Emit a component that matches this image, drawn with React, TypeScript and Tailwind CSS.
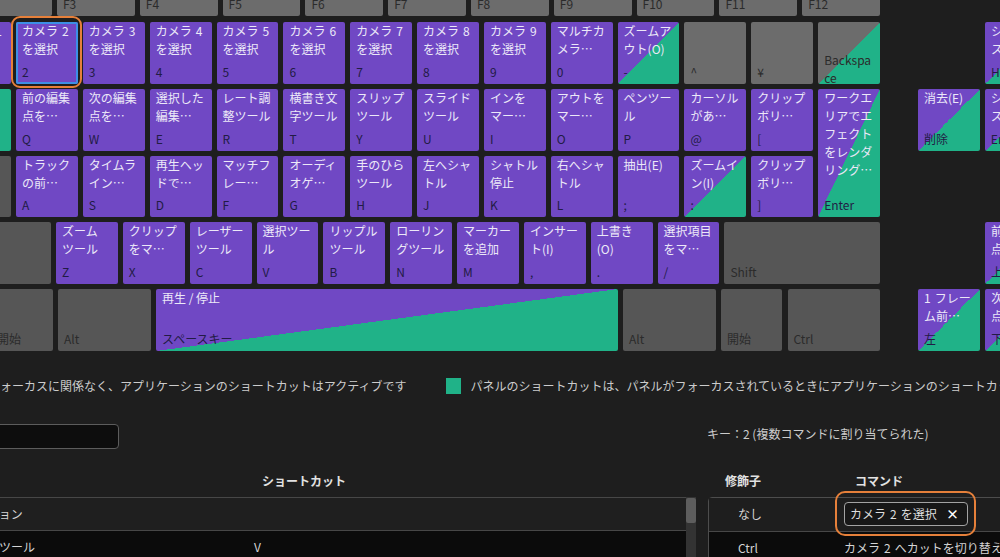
import React from "react";

type Kind = "p" | "s" | "gs" | "gl" | "gd" | "green";

interface KeyDef {
  w: string;
  h?: string;
  kind: Kind;
  lines?: string[];
  label?: string[];
  ml?: string;
  sel?: boolean;
  labelClass?: string;
}

const BG: Record<Kind, string> = {
  p: "bg-[#7048c4]",
  s: "bg-[linear-gradient(to_bottom_right,#7048c4_50%,#20b288_50%)]",
  gs: "bg-[linear-gradient(to_bottom_right,#6c6c6c_50%,#20b288_50%)]",
  gl: "bg-[#6c6c6c]",
  gd: "bg-[#565656]",
  green: "bg-[#20b288]",
};

const W = "w-[61.85px]";
const FW = "w-[77.8px]";
const SP = "\u2004";

function Key({ k }: { k: KeyDef }) {
  const gray = k.kind === "gl" || k.kind === "gd" || k.kind === "gs";
  return (
    <div
      className={`relative shrink-0 rounded-[2px] flex flex-col justify-between px-[6px] pb-[3px] ${k.w} ${
        k.h ?? "h-[61.8px]"
      } ${BG[k.kind]} ${k.ml ?? ""} ${k.sel ? "shadow-[inset_0_0_0_2px_#3d8fe6]" : ""}`}
    >
      <div className="text-[12px] leading-[18px] text-[#ece8f8] whitespace-nowrap">
        {(k.lines ?? []).map((l, i) => (
          <div key={i}>{l}</div>
        ))}
      </div>
      <div
        className={`text-[12px] leading-[18px] whitespace-nowrap ${
          gray ? "text-[#2b2b2b]" : "text-[#221b45]"
        } ${k.labelClass ?? ""}`}
      >
        {(k.label ?? []).map((l, i) => (
          <div key={i}>{l}</div>
        ))}
      </div>
      {k.sel && (
        <div className="absolute -left-[5px] -right-[4px] -top-[6px] -bottom-[4px] rounded-[9px] border-2 border-[#e6803a] pointer-events-none" />
      )}
    </div>
  );
}

const fRow: KeyDef[] = ["F2", "F3", "F4", "F5", "F6", "F7", "F8", "F9", "F10", "F11", "F12"].map(
  (f) => ({ w: FW, kind: "gl" as Kind, label: [f] })
);

const cam = (n: number, sel = false): KeyDef => ({
  w: W,
  kind: "p",
  lines: [`カメラ${SP}${n}`, "を選択"],
  label: [String(n)],
  sel,
});

const row1: KeyDef[] = [
  cam(1),
  cam(2, true),
  cam(3),
  cam(4),
  cam(5),
  cam(6),
  cam(7),
  cam(8),
  cam(9),
  { w: W, kind: "p", lines: ["マルチカ", "メラ…"], label: ["0"] },
  { w: W, kind: "s", lines: ["ズームア", "ウト(O)"], label: ["-"] },
  { w: W, kind: "gl", label: ["^"] },
  { w: W, kind: "gl", label: ["¥"] },
  { w: W, kind: "gs", label: ["Backspa", "ce"], labelClass: "mb-[-6.5px]" },
  { w: W, kind: "s", lines: ["シーケン", "スの先…"], label: ["Home"], ml: "ml-[100px]" },
];

const row2: KeyDef[] = [
  { w: W, kind: "green" },
  { w: W, kind: "p", lines: ["前の編集", "点を…"], label: ["Q"] },
  { w: W, kind: "p", lines: ["次の編集", "点を…"], label: ["W"] },
  { w: W, kind: "p", lines: ["選択した", "編集…"], label: ["E"] },
  { w: W, kind: "p", lines: ["レート調", "整ツール"], label: ["R"] },
  { w: W, kind: "p", lines: ["横書き文", "字ツール"], label: ["T"] },
  { w: W, kind: "p", lines: ["スリップ", "ツール"], label: ["Y"] },
  { w: W, kind: "p", lines: ["スライド", "ツール"], label: ["U"] },
  { w: W, kind: "p", lines: ["インを", "マー…"], label: ["I"] },
  { w: W, kind: "p", lines: ["アウトを", "マー…"], label: ["O"] },
  { w: W, kind: "p", lines: ["ペンツー", "ル"], label: ["P"] },
  { w: W, kind: "p", lines: ["カーソル", "があ…"], label: ["@"] },
  { w: W, kind: "p", lines: ["クリップ", "ボリ…"], label: ["["] },
];

const row3: KeyDef[] = [
  { w: W, kind: "gd" },
  { w: W, kind: "p", lines: ["トラック", "の前…"], label: ["A"] },
  { w: W, kind: "p", lines: ["タイムラ", "イン…"], label: ["S"] },
  { w: W, kind: "p", lines: ["再生ヘッ", "ドで…"], label: ["D"] },
  { w: W, kind: "p", lines: ["マッチフ", "レー…"], label: ["F"] },
  { w: W, kind: "p", lines: ["オーディ", "オゲ…"], label: ["G"] },
  { w: W, kind: "p", lines: ["手のひら", "ツール"], label: ["H"] },
  { w: W, kind: "p", lines: ["左へシャ", "トル"], label: ["J"] },
  { w: W, kind: "p", lines: ["シャトル", "停止"], label: ["K"] },
  { w: W, kind: "p", lines: ["右へシャ", "トル"], label: ["L"] },
  { w: W, kind: "p", lines: ["抽出(E)"], label: [";"] },
  { w: W, kind: "s", lines: ["ズームイ", "ン(I)"], label: [":"] },
  { w: W, kind: "p", lines: ["クリップ", "ボリ…"], label: ["]"] },
];

const enterKey: KeyDef = {
  w: W,
  h: "h-[128.6px]",
  kind: "s",
  lines: ["ワークエ", "リアでエ", "フェクト", "をレンダ", "リング…"],
  label: ["Enter"],
};

const delKey: KeyDef = { w: W, kind: "s", lines: ["消去(E)"], label: ["削除"], ml: "ml-[33px]" };
const endKey: KeyDef = { w: W, kind: "s", lines: ["シーケン", "スの最…"], label: ["End"] };

const row4: KeyDef[] = [
  { w: "w-[101.85px]", kind: "gd", label: ["Shift"] },
  { w: W, kind: "p", lines: ["ズーム", "ツール"], label: ["Z"] },
  { w: W, kind: "p", lines: ["クリップ", "をマ…"], label: ["X"] },
  { w: W, kind: "p", lines: ["レーザー", "ツール"], label: ["C"] },
  { w: W, kind: "p", lines: ["選択ツー", "ル"], label: ["V"] },
  { w: W, kind: "p", lines: ["リップル", "ツール"], label: ["B"] },
  { w: W, kind: "p", lines: ["ローリン", "グツール"], label: ["N"] },
  { w: W, kind: "p", lines: ["マーカー", "を追加"], label: ["M"] },
  { w: W, kind: "p", lines: ["インサー", "ト(I)"], label: [","] },
  { w: W, kind: "p", lines: ["上書き", "(O)"], label: ["."] },
  { w: W, kind: "p", lines: ["選択項目", "をマ…"], label: ["/"] },
  { w: "w-[155.5px]", kind: "gd", label: ["Shift"] },
  { w: W, kind: "s", lines: ["前の編集", "点を…"], label: ["上"], ml: "ml-[100px]" },
];

const row5: KeyDef[] = [
  { w: "w-[61.5px]", kind: "gd", label: ["開始"] },
  { w: "w-[92.5px]", kind: "gd", label: ["Alt"] },
  { w: "w-[461.5px]", kind: "s", lines: ["再生 / 停止"], label: ["スペースキー"] },
  { w: "w-[92.5px]", kind: "gd", label: ["Alt"] },
  { w: "w-[61px]", kind: "gd", label: ["開始"] },
  { w: "w-[92px]", kind: "gd", label: ["Ctrl"] },
  { w: W, kind: "s", lines: [`1${SP}フレー`, "ム前…"], label: ["左"], ml: "ml-[33px]" },
  { w: W, kind: "s", lines: ["次の編集", "点を…"], label: ["下"] },
];

export default function App() {
  return (
    <div className="w-[1000px] h-[557px] overflow-hidden bg-[#1e1e1e] flex flex-col font-['Noto_Sans_CJK_JP','Noto_Sans',sans-serif]">
      {/* Function row */}
      <div className="flex gap-[5px] mt-[-45.8px] ml-[-25.8px] shrink-0">
        {fRow.map((k, i) => (
          <Key key={i} k={k} />
        ))}
      </div>
      {/* Number row */}
      <div className="flex gap-[5px] mt-[6px] ml-[-50.85px] shrink-0">
        {row1.map((k, i) => (
          <Key key={i} k={k} />
        ))}
      </div>
      {/* QWERTY + ASDF rows with tall Enter */}
      <div className="flex items-start gap-[5px] mt-[5px] ml-[-50.85px] shrink-0">
        <div className="flex flex-col gap-[5px] shrink-0">
          <div className="flex gap-[5px]">
            {row2.map((k, i) => (
              <Key key={i} k={k} />
            ))}
          </div>
          <div className="flex gap-[5px]">
            {row3.map((k, i) => (
              <Key key={i} k={k} />
            ))}
          </div>
        </div>
        <Key k={enterKey} />
        <Key k={delKey} />
        <Key k={endKey} />
      </div>
      {/* ZXCV row */}
      <div className="flex gap-[5px] mt-[5px] ml-[-50.85px] shrink-0">
        {row4.map((k, i) => (
          <Key key={i} k={k} />
        ))}
      </div>
      {/* Bottom row */}
      <div className="flex gap-[5.5px] mt-[5px] ml-[-9px] shrink-0">
        {row5.map((k, i) => (
          <Key key={i} k={k} />
        ))}
      </div>

      {/* Legend */}
      <div className="mt-[26px] flex items-center h-[18px] text-[12px] leading-[18px] text-[#cccccc] whitespace-nowrap shrink-0">
        <span className="ml-[-12px] shrink-0">フォーカスに関係なく、アプリケーションのショートカットはアクティブです</span>
        <span className="ml-[40px] w-[15px] h-[16px] bg-[#20b288] shrink-0" />
        <span className="ml-[9px] shrink-0">
          パネルのショートカットは、パネルがフォーカスされているときにアプリケーションのショートカットより優先されます
        </span>
      </div>

      {/* Search + key info */}
      <div className="mt-[29px] flex h-[25px] shrink-0">
        <div className="ml-[-20px] w-[139px] h-[25px] shrink-0 bg-[#0d0d0d] border border-[#5c5c5c] rounded-[4px]" />
        <div className="ml-[588px] mt-[1px] text-[12px] leading-[18px] text-[#cccccc] whitespace-nowrap">
          キー：2 (複数コマンドに割り当てられた)
        </div>
      </div>

      {/* Tables */}
      <div className="mt-[23px] flex shrink-0">
        <div className="w-[696px] shrink-0">
          <div className="h-[18px] pl-[262px] text-[12px] leading-[18px] font-bold text-[#e2e2e2]">ショートカット</div>
          <div className="mt-[7px] flex">
            <div className="flex-1 border-t border-[#474747] text-[12px] leading-[18px] text-[#d4d4d4]">
              <div className="h-[33px] border-b border-[#474747] bg-[#1f1f1f] flex items-center whitespace-nowrap overflow-hidden">
                <span className="ml-[-73px]">アプリケーション</span>
              </div>
              <div className="h-[40px] bg-[#0b0b0b] flex items-start pt-[7px] whitespace-nowrap overflow-hidden">
                <span className="ml-[-25px] w-[279px] shrink-0">選択ツール</span>
                <span>V</span>
              </div>
            </div>
            <div className="w-[10px] bg-[#333333] flex flex-col">
              <div className="mt-[1px] h-[25px] bg-[#5d5d5d] rounded-[2px]" />
            </div>
          </div>
        </div>
        <div className="ml-[12px] w-[400px] shrink-0">
          <div className="h-[18px] flex text-[12px] leading-[18px] font-bold text-[#e2e2e2]">
            <span className="w-[147px] pl-[17px] shrink-0">修飾子</span>
            <span>コマンド</span>
          </div>
          <div className="mt-[7px] border border-[#4d4d4d] rounded-tl-[4px] text-[12px] leading-[18px] text-[#d4d4d4]">
            <div className="h-[33px] flex items-center bg-[#1e1e1e]">
              <span className="w-[135px] pl-[29px] shrink-0">なし</span>
              <div className="relative w-[124px] h-[24px] flex items-center pl-[5px] pr-[8px] border border-[#a3a3a3] rounded-[4px] bg-[#171717] text-[#dedede] whitespace-nowrap">
                <span>{`カメラ${SP}2${SP}を選択`}</span>
                <span className="ml-auto font-bold text-white text-[13px]">×</span>
                <div className="absolute -left-[10px] -right-[9px] -top-[12px] -bottom-[11px] rounded-[10px] border-2 border-[#e6803a] pointer-events-none" />
              </div>
            </div>
            <div className="h-[40px] border-t border-[#474747] bg-[#0b0b0b] flex items-start pt-[7px] whitespace-nowrap">
              <span className="w-[135px] pl-[29px] shrink-0">Ctrl</span>
              <span>{`カメラ${SP}2${SP}へカットを切り替え`}</span>
            </div>
          </div>
        </div>
      </div>
    </div>
  );
}
